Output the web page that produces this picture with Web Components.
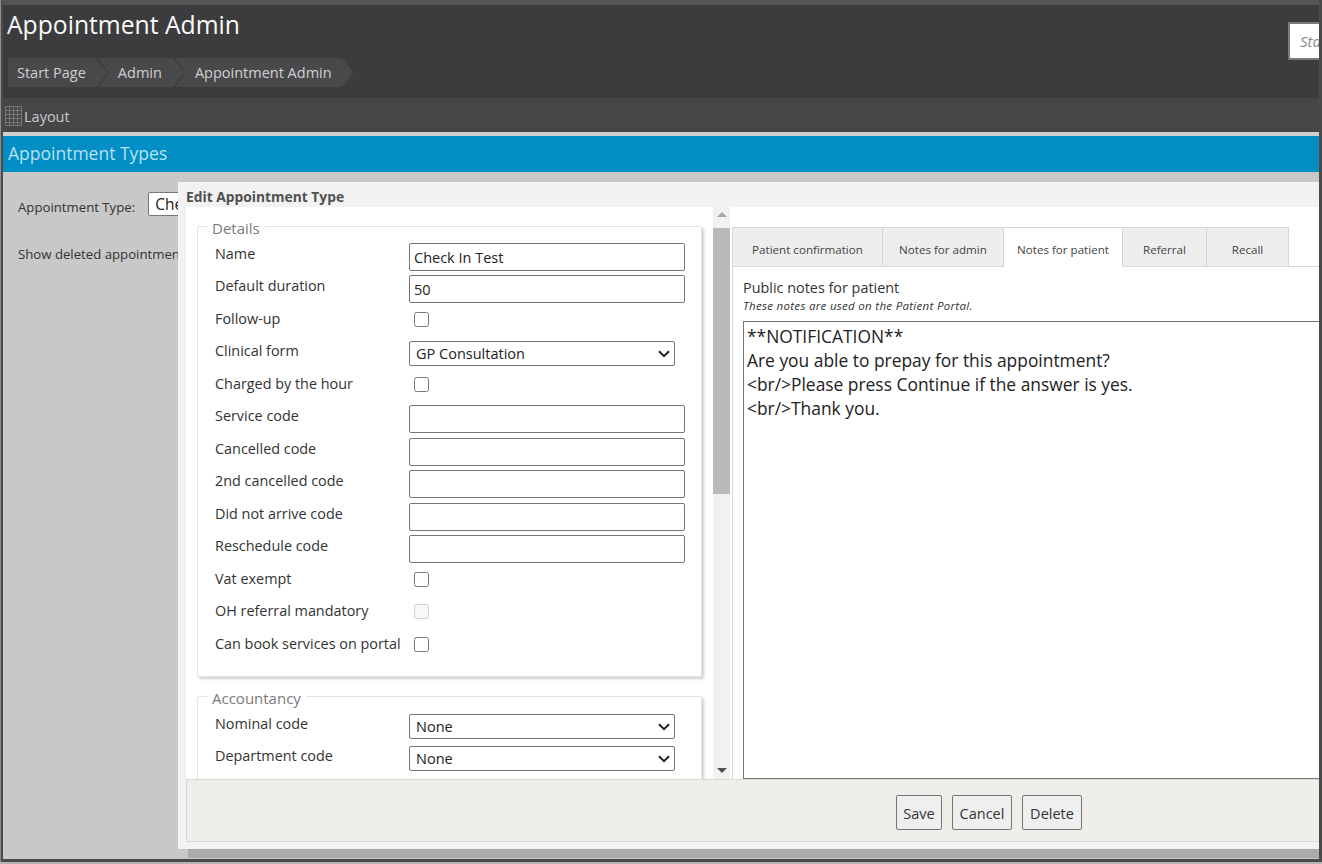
<!DOCTYPE html>
<html>
<head>
<meta charset="utf-8">
<title>Appointment Admin</title>
<style>
html, body { margin: 0; height: 100%; overflow: hidden; }
body { font-family: "Open Sans", "Noto Sans", sans-serif; background: #c8c8c8; color: #333; }
</style>
</head>
<body>
<app-shell>
	<app-header slot="top" heading="Appointment Admin" search="Sta">
		<bread-crumb first>Start Page</bread-crumb>
		<bread-crumb>Admin</bread-crumb>
		<bread-crumb>Appointment Admin</bread-crumb>
	</app-header>
	<layout-bar slot="top">Layout</layout-bar>
	<section-band slot="top">Appointment Types</section-band>
	<type-filter></type-filter>
	<edit-dialog heading="Edit Appointment Type">
		<form-group slot="left" legend="Details" height="459" pad="5">
			<form-row label="Name"><text-box value="Check In Test"></text-box></form-row>
			<form-row label="Default duration"><text-box value="50"></text-box></form-row>
			<form-row label="Follow-up"><check-box></check-box></form-row>
			<form-row label="Clinical form"><select-box value="GP Consultation"></select-box></form-row>
			<form-row label="Charged by the hour"><check-box></check-box></form-row>
			<form-row label="Service code"><text-box></text-box></form-row>
			<form-row label="Cancelled code"><text-box></text-box></form-row>
			<form-row label="2nd cancelled code"><text-box></text-box></form-row>
			<form-row label="Did not arrive code"><text-box></text-box></form-row>
			<form-row label="Reschedule code"><text-box></text-box></form-row>
			<form-row label="Vat exempt"><check-box></check-box></form-row>
			<form-row label="OH referral mandatory"><check-box disabled></check-box></form-row>
			<form-row label="Can book services on portal"><check-box></check-box></form-row>
		</form-group>
		<form-group slot="left" legend="Accountancy" height="120" pad="5">
			<form-row label="Nominal code"><select-box value="None"></select-box></form-row>
			<form-row label="Department code"><select-box value="None"></select-box></form-row>
		</form-group>
		<notes-tabs slot="right"></notes-tabs>
		<action-button slot="footer" style="width:46px">Save</action-button>
		<action-button slot="footer" style="width:60px">Cancel</action-button>
		<action-button slot="footer" style="width:60px">Delete</action-button>
	</edit-dialog>
</app-shell>

<script>
const html = String.raw;

function define(name, markup, setup) {
	const template = document.createElement("template");
	template.innerHTML = markup;
	customElements.define(name, class extends HTMLElement {
		constructor() {
			super();
			this.attachShadow({ mode: "open" });
			this.shadowRoot.appendChild(template.content.cloneNode(true));
		}
		connectedCallback() {
			if (setup) setup(this, this.shadowRoot);
		}
	});
}

define("app-shell", html`
<style>
:host { display: flex; flex-direction: column; box-sizing: border-box; width: 1322px; height: 864px; overflow: hidden; background: #b5b5b5; }
.frame { display: flex; flex-direction: column; height: 862px; box-sizing: border-box; background: #4a4a4a; padding: 0 3px 3px 3px; box-shadow: inset 1px 0 #8c8c8c; }
.inner { position: relative; flex: 1; display: flex; flex-direction: column; min-height: 0; overflow: hidden; background: #c8c8c8; }
.body { position: relative; flex: 1; }
</style>
<div class="frame">
	<div class="inner">
		<slot name="top"></slot>
		<div class="body"><slot></slot></div>
	</div>
</div>
`);

define("app-header", html`
<style>
:host { display: block; height: 98px; box-sizing: border-box; position: relative; background: #3c3c3e; border-top: 5px solid #545456; color: #fff; }
h1 { margin: 0; padding: 4px 0 0 4px; height: 53px; box-sizing: border-box; font-size: 24.7px; font-weight: 400; line-height: 32px; color: #fafafa; }
nav { display: flex; padding-left: 5px; }
.search { position: absolute; left: 1285px; top: 17px; width: 42px; height: 38px; box-sizing: border-box; border: 2px solid #7a7a7a; background: #fff; color: #888; font-style: italic; font-size: 15px; line-height: 34px; padding-left: 10px; overflow: hidden; }
</style>
<h1></h1>
<nav><slot></slot></nav>
<div class="search"></div>
`, (el, root) => {
	root.querySelector("h1").textContent = el.getAttribute("heading");
	root.querySelector(".search").textContent = el.getAttribute("search");
});

define("bread-crumb", html`
<style>
:host { display: block; height: 29px; margin-right: -10px; padding: 0 23px 0 20px; background: #49494b; color: #cfcfcf; font-size: 14.5px; line-height: 29px; white-space: nowrap;
	clip-path: polygon(0 0, calc(100% - 12px) 0, 100% 50%, calc(100% - 12px) 100%, 0 100%, 11px 50%); }
:host([first]) { padding: 0 22px 0 9px; clip-path: polygon(0 0, calc(100% - 12px) 0, 100% 50%, calc(100% - 12px) 100%, 0 100%); }
:host(:last-child) { padding-right: 22px; }
</style>
<slot></slot>
`);

define("layout-bar", html`
<style>
:host { display: flex; align-items: center; gap: 2px; height: 34px; background: #464648; color: #c8c8c8; font-size: 14.5px; padding: 2px 0 0 2px; box-sizing: border-box; }
svg { display: block; }
</style>
<svg width="17" height="20" viewBox="0 0 17 20" fill="none" stroke="#77777a" stroke-width="1">
	<path d="M.5.5h16v19H.5zM.5 4.5h16M.5 8.5h16M.5 12.5h16M.5 16.5h16M4.5.5v19M8.5.5v19M12.5.5v19"/>
</svg>
<slot></slot>
`);

define("section-band", html`
<style>
:host { display: block; height: 40px; box-sizing: border-box; border-top: 4px solid #cfcfcf; background: #008ec4; color: #b9e2f2; font-size: 17.5px; line-height: 35px; padding-left: 5px; }
</style>
<slot></slot>
`);

define("type-filter", html`
<style>
:host { display: block; padding: 20px 0 0 15px; font-size: 13.2px; color: #333; white-space: nowrap; }
.line { display: flex; align-items: center; height: 24px; gap: 13px; }
.label { position: relative; top: 3px; }
.pick { font-size: 15.5px; height: 24px; box-sizing: border-box; border: 1px solid #777; border-radius: 2px; padding: 0 6px; line-height: 22px; width: 80px; background: #fff; color: #222; }
.line + .line { margin-top: 26px; }
</style>
<div class="line"><span class="label">Appointment Type:</span> <span class="pick">Che</span></div>
<div class="line">Show deleted appointmen</div>
`);

define("edit-dialog", html`
<style>
:host { position: absolute; left: 175px; top: 10px; right: 0; height: 667px; display: flex; flex-direction: column; box-sizing: border-box; padding: 0 0 7px 8px; background: #f2f2f2; box-shadow: 10px 9px 0 #ababab; }
h2 { margin: 0; height: 25px; font-size: 13.8px; font-weight: 700; line-height: 29px; color: #505050; }
.main { flex: 1; display: flex; min-height: 0; background: #fff; }
.left { position: relative; width: 546px; flex: none; overflow: hidden; padding: 20px 0 0 11px; box-sizing: border-box; }
.bar { position: absolute; left: 527px; top: 0; bottom: 0; width: 17px; background: #f1f1f1; }
.thumb { position: absolute; left: 0; right: 0; top: 21px; height: 266px; background: #b9b9b9; }
.up, .down { position: absolute; left: 4px; border: 5px solid transparent; }
.up { top: 5px; border-top: 0; border-bottom: 5px solid #a8a8a8; }
.down { bottom: 6px; border-bottom: 0; border-top: 5px solid #505050; }
.right { flex: 1; min-width: 0; overflow: hidden; }
footer { height: 63px; box-sizing: border-box; display: flex; align-items: flex-start; gap: 10px; background: #f0eee8; border: 1px solid #d9d8d3; border-right: 0; padding: 15px 0 0 709px; }
</style>
<h2></h2>
<div class="main">
	<div class="left">
		<slot name="left"></slot>
		<div class="bar"><div class="up"></div><div class="thumb"></div><div class="down"></div></div>
	</div>
	<div class="right"><slot name="right"></slot></div>
</div>
<footer><slot name="footer"></slot></footer>
`, (el, root) => {
	root.querySelector("h2").textContent = el.getAttribute("heading");
});

define("form-group", html`
<style>
:host { display: block; width: 505px; margin-bottom: 11px; }
:host(:first-child) { margin-top: -9px; }
fieldset { margin: 0; padding: 5px 0 0 17px; box-sizing: border-box; border: 1px solid #e4e4e4; border-radius: 2px; box-shadow: 2px 2px 3px #cfcfcf; min-width: 0; }
legend { margin-left: -8px; padding: 0 5px; font-size: 15px; line-height: 17px; color: #7a7a7a; position: relative; top: 2px; }
.rows { display: grid; grid-auto-rows: 32.5px; }
</style>
<fieldset>
	<legend></legend>
	<div class="rows"><slot></slot></div>
</fieldset>
`, (el, root) => {
	const box = root.querySelector("fieldset");
	root.querySelector("legend").textContent = el.getAttribute("legend");
	box.style.height = el.getAttribute("height") + "px";
	box.style.paddingTop = el.getAttribute("pad") + "px";
});

define("form-row", html`
<style>
:host { display: grid; grid-template-columns: 194px 1fr; align-items: center; }
label { font-size: 14.4px; color: #333; position: relative; top: -3px; white-space: nowrap; }
</style>
<label></label>
<div><slot></slot></div>
`, (el, root) => {
	root.querySelector("label").textContent = el.getAttribute("label");
});

define("text-box", html`
<style>
:host { display: block; margin-top: 1px; }
input { display: block; box-sizing: border-box; width: 276px; height: 28px; margin: 0; padding: 1px 4px 0; border: 1px solid #767676; border-radius: 2px; background: #fff; font: 14.5px "Open Sans", "Noto Sans", sans-serif; color: #222; }
</style>
<input type="text">
`, (el, root) => {
	root.querySelector("input").value = el.getAttribute("value") || "";
});

define("select-box", html`
<style>
:host { display: block; position: relative; width: 266px; }
select { display: block; box-sizing: border-box; width: 266px; height: 25px; margin: 0; padding: 0 0 0 6px; border: 1px solid #767676; border-radius: 2px; background: #fff; font: 14.5px "Open Sans", "Noto Sans", sans-serif; color: #222; appearance: none; }
svg { position: absolute; right: 5px; top: 9px; pointer-events: none; }
</style>
<select><option></option></select>
<svg width="12" height="8" viewBox="0 0 12 8" fill="none" stroke="#222" stroke-width="2"><path d="M1 1.2l5 5 5-5"/></svg>
`, (el, root) => {
	root.querySelector("option").textContent = el.getAttribute("value");
});

define("check-box", html`
<style>
:host { display: block; position: relative; top: -2px; }
input { display: block; width: 15px; height: 15px; margin: 0 0 0 5px; }
</style>
<input type="checkbox">
`, (el, root) => {
	root.querySelector("input").disabled = el.hasAttribute("disabled");
});

define("notes-tabs", html`
<style>
:host { display: flex; flex-direction: column; height: 100%; box-sizing: border-box; padding-top: 20px; }
.tabs { display: flex; height: 40px; box-sizing: border-box; border-bottom: 1px solid #d6d6d6; }
.tab { box-sizing: border-box; height: 40px; display: flex; align-items: center; justify-content: center; padding-top: 5px; background: #eeeeee; border: 1px solid #d6d6d6; border-left-width: 0; font-size: 11.6px; color: #444; white-space: nowrap; }
.tab:first-child { border-left-width: 1px; }
.tab.on { background: #fff; border-bottom-color: #fff; }
.pane { flex: 1; min-height: 0; display: flex; flex-direction: column; border-left: 1px solid #d6d6d6; padding: 11px 0 0 10px; }
.title { font-size: 14.4px; line-height: 19px; color: #333; }
.hint { font-size: 11.5px; letter-spacing: .3px; font-style: italic; line-height: 18px; color: #333; margin-bottom: 6px; }
.notes { flex: 1; margin-right: -4px; box-sizing: border-box; border: 1px solid #767676; padding: 2px 3px; font-size: 17.4px; line-height: 24.1px; color: #222; white-space: pre; overflow: hidden; }
</style>
<div class="tabs">
	<div class="tab" style="width:151px">Patient confirmation</div>
	<div class="tab" style="width:121px">Notes for admin</div>
	<div class="tab on" style="width:119px">Notes for patient</div>
	<div class="tab" style="width:84px">Referral</div>
	<div class="tab" style="width:82px">Recall</div>
</div>
<div class="pane">
	<div class="title">Public notes for patient</div>
	<div class="hint">These notes are used on the Patient Portal.</div>
	<div class="notes">**NOTIFICATION**
Are you able to prepay for this appointment?
&lt;br/&gt;Please press Continue if the answer is yes.
&lt;br/&gt;Thank you.</div>
</div>
`);

define("action-button", html`
<style>
:host { display: block; height: 35px; box-sizing: border-box; border: 1px solid #767676; border-radius: 2px; background: #efefef; font-size: 14.5px; line-height: 35px; text-align: center; color: #333; }
</style>
<slot></slot>
`);
</script>
</body>
</html>
